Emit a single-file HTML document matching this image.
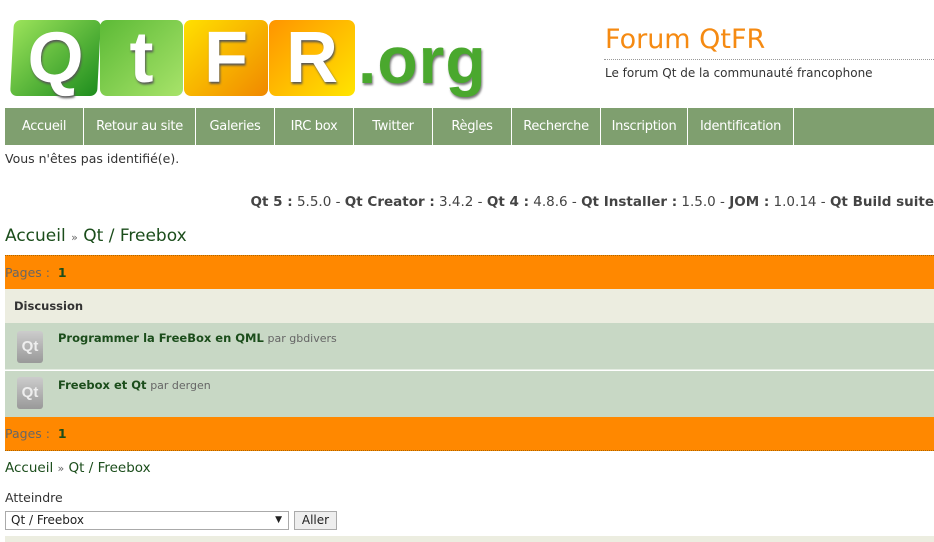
<!DOCTYPE html>
<html><head><meta charset="utf-8"><style>
*{margin:0;padding:0;box-sizing:border-box}
body{width:934px;height:542px;overflow:hidden;background:#fff;font-family:"DejaVu Sans","Liberation Sans",sans-serif;font-size:12px;color:#333;position:relative}
.a{position:absolute}
.tile{position:absolute;top:20px;height:76px;border-radius:7px;color:#fff;font:bold 72px "Liberation Sans",sans-serif;text-align:center;line-height:76px;text-shadow:1px 2px 2px #555}
.nav{top:108px;left:5px;width:929px;height:37px;background:#7f9f6f}
.nav span{position:absolute;top:0;height:37px;line-height:37px;color:#fff;font-size:13px;text-align:center;border-right:1px solid #fff;white-space:nowrap;letter-spacing:-0.3px}
.g{color:#1b4d1b}
.row{left:5px;width:929px;background:#c8d8c5}
.ic{position:absolute;left:12px;width:26px;height:32px;background:linear-gradient(#ccc,#999);border-radius:3px;color:#eee;font:bold 15px "Liberation Sans Narrow","Liberation Sans",sans-serif;text-align:center;line-height:32px}
</style></head><body>
<div class="tile" style="left:12px;width:87px;background:linear-gradient(135deg,#9be35a,#1e8d1e);transform:skewX(-3deg)">Q</div>
<div class="tile" style="left:100px;width:83px;background:linear-gradient(135deg,#5cba36,#a8e36a)">t</div>
<div class="tile" style="left:184px;width:84px;background:linear-gradient(135deg,#ffe000,#f08800)">F</div>
<div class="tile" style="left:269px;width:86px;background:linear-gradient(135deg,#ff9400,#ffe500)">R</div>
<div class="a" style="left:358px;top:22px;font:bold 66px 'Liberation Sans',sans-serif;color:#4aa82e;text-shadow:1px 2px 2px #777;letter-spacing:1px">.org</div>
<div class="a" style="left:605px;top:24px;font-size:27px;color:#f58a12;font-family:'DejaVu Sans',sans-serif">Forum QtFR</div>
<div class="a" style="left:604px;top:59px;width:330px;border-top:1px dotted #999"></div>
<div class="a" style="left:605px;top:66px;font-size:12px">Le forum Qt de la communauté francophone</div>
<div class="a nav">
<span style="left:0;width:79px">Accueil</span>
<span style="left:79px;width:112px">Retour au site</span>
<span style="left:191px;width:79px">Galeries</span>
<span style="left:270px;width:79px">IRC box</span>
<span style="left:349px;width:79px">Twitter</span>
<span style="left:428px;width:79px">Règles</span>
<span style="left:507px;width:89px">Recherche</span>
<span style="left:596px;width:87px">Inscription</span>
<span style="left:683px;width:106px">Identification</span>
</div>
<div class="a" style="left:5px;top:151px;font-size:12.5px">Vous n'êtes pas identifié(e).</div>
<div class="a" style="right:0;top:194px;font-size:13.5px;white-space:nowrap;color:#444"><b>Qt 5 :</b> 5.5.0 - <b>Qt Creator :</b> 3.4.2 - <b>Qt 4 :</b> 4.8.6 - <b>Qt Installer :</b> 1.5.0 - <b>JOM :</b> 1.0.14 - <b>Qt Build suite</b></div>
<div class="a g" style="left:5px;top:226px;font-size:17px">Accueil <span style="font-size:11px;color:#666">»</span> Qt / Freebox</div>
<div class="a" style="left:5px;top:255px;width:929px;height:34px;background:#ff8800;border-top:1px dotted #aa6600;color:#666;line-height:34px;font-size:12.5px">Pages : &nbsp;<b class="g">1</b></div>
<div class="a" style="left:5px;top:289px;width:929px;height:34px;background:#ecede0;line-height:34px;padding-left:9px;font-weight:bold;font-size:11.5px">Discussion</div>
<div class="a row" style="top:323px;height:47px;border-bottom:1px solid #e4ece2"><div class="ic" style="top:8px">Qt</div><div class="a" style="left:53px;top:8px;font-size:11.5px"><b class="g">Programmer la FreeBox en QML</b> <span style="color:#666;font-size:11px">par gbdivers</span></div></div>
<div class="a row" style="top:371px;height:46px"><div class="ic" style="top:6px">Qt</div><div class="a" style="left:53px;top:7px;font-size:11.5px"><b class="g">Freebox et Qt</b> <span style="color:#666;font-size:11px">par dergen</span></div></div>
<div class="a" style="left:5px;top:417px;width:929px;height:34px;background:#ff8800;border-bottom:1px dotted #aa6600;color:#666;line-height:34px;font-size:12.5px">Pages : &nbsp;<b class="g">1</b></div>
<div class="a g" style="left:5px;top:460px;font-size:13.5px">Accueil <span style="font-size:11px;color:#666">»</span> Qt / Freebox</div>
<div class="a" style="left:5px;top:490px;font-size:12.5px">Atteindre</div>
<div class="a" style="left:5px;top:511px;width:284px;height:19px;border:1px solid #aaa;font-size:12px;line-height:17px;padding-left:5px;color:#222">Qt / Freebox<span style="position:absolute;right:6px;font-size:9px">▼</span></div>
<div class="a" style="left:294px;top:511px;width:43px;height:19px;border:1px solid #aaa;background:#eee;font-size:12px;line-height:17px;text-align:center;color:#222">Aller</div>
<div class="a" style="left:5px;top:536px;width:929px;height:6px;background:#ecede0"></div>
</body></html>
